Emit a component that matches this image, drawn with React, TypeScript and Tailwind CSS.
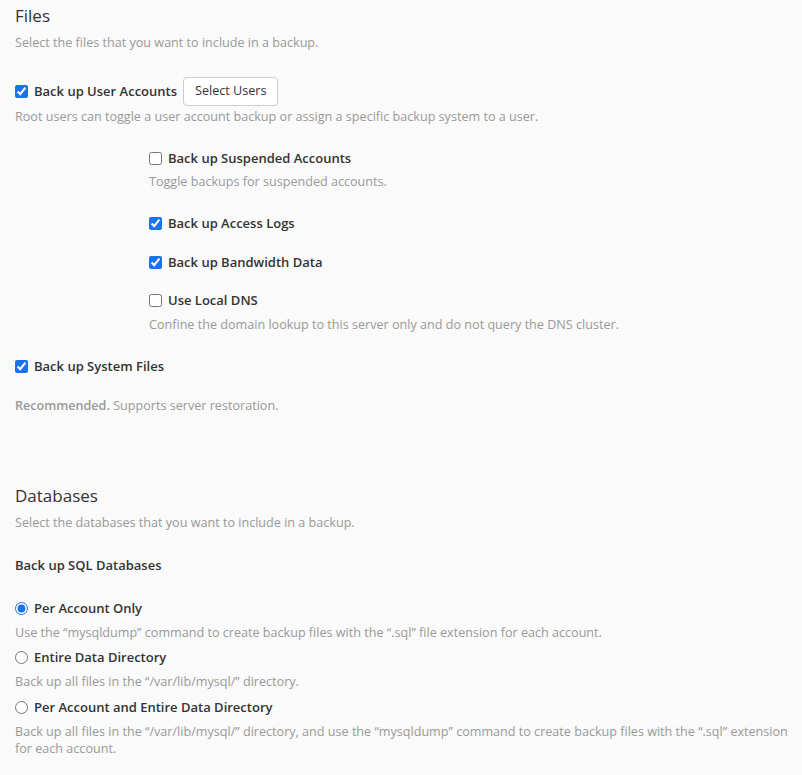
function Check({ label, checked, type = "checkbox", name }: { label: string; checked?: boolean; type?: string; name?: string }) {
  return (
    <label className="flex items-center gap-[6px] text-[13px] font-semibold text-[#333]">
      <input type={type} name={name} defaultChecked={checked} className="m-0 h-[13px] w-[13px] accent-[#1a73e8]" />
      {label}
    </label>
  );
}

function Hint({ children }: { children: React.ReactNode }) {
  return <p className="text-[12.6px] text-[#999] leading-[17px]">{children}</p>;
}

function App() {
  return (
    <div className="min-h-[775px] bg-[#fafafa] pl-[15px] pr-[8px] pt-[4px] font-['Open_Sans',sans-serif] text-[#333]">
      <h2 className="text-[17px] leading-[24px]">Files</h2>
      <div className="mt-[6px]">
        <Hint>Select the files that you want to include in a backup.</Hint>
      </div>

      <div className="mt-[26px] flex items-center gap-[6px]">
        <Check label="Back up User Accounts" checked />
        <button className="h-[29px] rounded-[4px] border border-[#ccc] bg-white px-[11px] text-[12.6px] text-[#333]">
          Select Users
        </button>
      </div>
      <div className="mt-[2px]">
        <Hint>Root users can toggle a user account backup or assign a specific backup system to a user.</Hint>
      </div>

      <div className="ml-[134px] mt-[24px] flex flex-col">
        <Check label="Back up Suspended Accounts" />
        <div className="mt-[4px]">
          <Hint>Toggle backups for suspended accounts.</Hint>
        </div>
        <div className="mt-[24px]">
          <Check label="Back up Access Logs" checked />
        </div>
        <div className="mt-[20px]">
          <Check label="Back up Bandwidth Data" checked />
        </div>
        <div className="mt-[18px]">
          <Check label="Use Local DNS" />
        </div>
        <div className="mt-[6px]">
          <Hint>Confine the domain lookup to this server only and do not query the DNS cluster.</Hint>
        </div>
      </div>

      <div className="mt-[24px]">
        <Check label="Back up System Files" checked />
      </div>
      <div className="mt-[20px]">
        <Hint>
          <span className="font-semibold">Recommended.</span> Supports server restoration.
        </Hint>
      </div>

      <h2 className="mt-[70px] text-[17px] leading-[24px]">Databases</h2>
      <div className="mt-[6px]">
        <Hint>Select the databases that you want to include in a backup.</Hint>
      </div>
      <p className="mt-[25px] text-[13px] font-semibold">Back up SQL Databases</p>

      <div className="mt-[24px] flex flex-col">
        <Check type="radio" name="sql" label="Per Account Only" checked />
        <div className="mt-[5px]">
          <Hint>Use the “mysqldump” command to create backup files with the “.sql” file extension for each account.</Hint>
        </div>
        <div className="mt-[7px]">
          <Check type="radio" name="sql" label="Entire Data Directory" />
        </div>
        <div className="mt-[6px]">
          <Hint>Back up all files in the “/var/lib/mysql/” directory.</Hint>
        </div>
        <div className="mt-[8px]">
          <Check type="radio" name="sql" label="Per Account and Entire Data Directory" />
        </div>
        <div className="mt-[5px]">
          <Hint>
            Back up all files in the “/var/lib/mysql/” directory, and use the “mysqldump” command to create backup files with the “.sql” extension for each account.
          </Hint>
        </div>
      </div>
    </div>
  );
}

export default App;
